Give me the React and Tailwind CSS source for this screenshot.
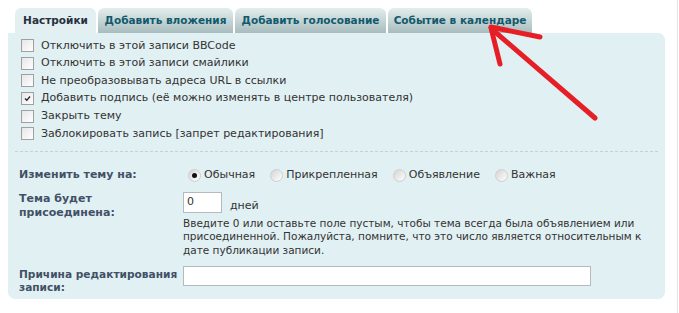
import React from 'react'

const TABS = [
  { id: 'options', label: 'Настройки', active: true, w: 'w-[81px]' },
  { id: 'attach', label: 'Добавить вложения', w: 'w-[135px]' },
  { id: 'poll', label: 'Добавить голосование', w: 'w-[151px]' },
  { id: 'calendar', label: 'Событие в календаре', w: 'w-[144px]' },
]

const OPTIONS = [
  { label: 'Отключить в этой записи BBCode' },
  { label: 'Отключить в этой записи смайлики' },
  { label: 'Не преобразовывать адреса URL в ссылки' },
  { label: 'Добавить подпись (её можно изменять в центре пользователя)', checked: true },
  { label: 'Закрыть тему' },
  { label: 'Заблокировать запись [запрет редактирования]' },
]

const TOPIC_TYPES = [
  { label: 'Обычная', checked: true },
  { label: 'Прикрепленная' },
  { label: 'Объявление' },
  { label: 'Важная' },
]

function Checkbox({ checked }) {
  return (
    <span className="w-[13px] h-[13px] border border-[#a0a0a0] bg-gradient-to-br from-[#e6e6e6] to-white flex items-center justify-center shrink-0">
      {checked && (
        <svg width="9" height="9" viewBox="0 0 9 9">
          <path d="M2 4.5 L3.8 6.3 L7 2.5" fill="none" stroke="#222" strokeWidth="1.3" />
        </svg>
      )}
    </span>
  )
}

function Radio({ checked }) {
  return (
    <span className="w-[13px] h-[13px] rounded-full border border-[#cfcfcf] bg-gradient-to-br from-[#d4d4d4] to-white flex items-center justify-center shrink-0">
      {checked && <span className="w-[5px] h-[5px] rounded-full bg-[#111]" />}
    </span>
  )
}

export default function App() {
  return (
    <div className="relative w-[679px] h-[313px] bg-white overflow-hidden font-['DejaVu_Sans',Verdana,sans-serif] text-[11px] text-[#333]">
      <div className="w-[678px] h-full border-r border-[#e4e4e4]">
        {/* tabs */}
        <div className="flex gap-[2px] pl-[15px] pt-[8px] h-[33px]">
          {TABS.map((t) => (
            <div
              key={t.id}
              className={`${t.w} h-[25px] rounded-t-[6px] flex items-center justify-center font-bold text-[10.5px] ${
                t.active
                  ? 'bg-[#e3eff1] text-[#28313f]'
                  : 'bg-gradient-to-b from-[#e4eded] to-[#a8bdbe] text-[#115a6d]'
              }`}
            >
              {t.label}
            </div>
          ))}
        </div>

        {/* panel */}
        <div className="ml-[8px] w-[657px] h-[266px] rounded-[7px] rounded-tl-none bg-[#e1f0f2] pt-[4px]">
          <div className="pl-[13px] flex flex-col">
            {OPTIONS.map((o) => (
              <label key={o.label} className="h-[17.6px] flex items-center gap-[7px]">
                <Checkbox checked={o.checked} />
                <span>{o.label}</span>
              </label>
            ))}
          </div>

          <div className="mt-[8px] mx-[7px] border-t border-dashed border-[#c4d2d4]" />

          <div className="mt-[15px] pl-[11px] flex flex-col">
            <div className="flex items-center h-[17px]">
              <div className="w-[164px] font-bold text-[#425067]">Изменить тему на:</div>
              <div className="flex items-center ml-[5px]">
                {TOPIC_TYPES.map((r) => (
                  <label key={r.label} className="flex items-center gap-[3px] mr-[15px]">
                    <Radio checked={r.checked} />
                    <span>{r.label}</span>
                  </label>
                ))}
              </div>
            </div>

            <div className="flex mt-[8px]">
              <div className="w-[164px] shrink-0 font-bold text-[#425067] leading-[14px] whitespace-nowrap">
                Тема будет
                <br />
                присоединена:
              </div>
              <div className="flex flex-col">
                <div className="flex items-end gap-[8px]">
                  <div className="w-[39px] h-[21px] bg-white border border-[#b4bac0] px-[3px] flex items-center">0</div>
                  <span className="leading-[14px]">дней</span>
                </div>
                <div className="mt-[4px] leading-[13.5px] w-[460px] text-[10.5px]">
                  Введите 0 или оставьте поле пустым, чтобы тема всегда была объявлением или присоединенной. Пожалуйста, помните, что это число является относительным к дате публикации записи.
                </div>
              </div>
            </div>

            <div className="flex mt-[9px]">
              <div className="w-[164px] shrink-0 font-bold text-[#425067] leading-[13px] pt-[2px] whitespace-nowrap text-[10.6px]">
                Причина редактирования
                <br />
                записи:
              </div>
              <div className="w-[408px] h-[20px] bg-white border border-[#b4bac0]" />
            </div>
          </div>
        </div>
      </div>

      {/* red annotation arrow */}
      <svg className="absolute left-0 top-0 pointer-events-none" width="679" height="313">
        <g fill="none" stroke="#e61e26" strokeWidth="5" strokeLinecap="round" strokeLinejoin="round">
          <path d="M491 27 L540 37" />
          <path d="M491 28 L500 64" />
          <path d="M494 31 L595 118" />
        </g>
      </svg>
    </div>
  )
}
